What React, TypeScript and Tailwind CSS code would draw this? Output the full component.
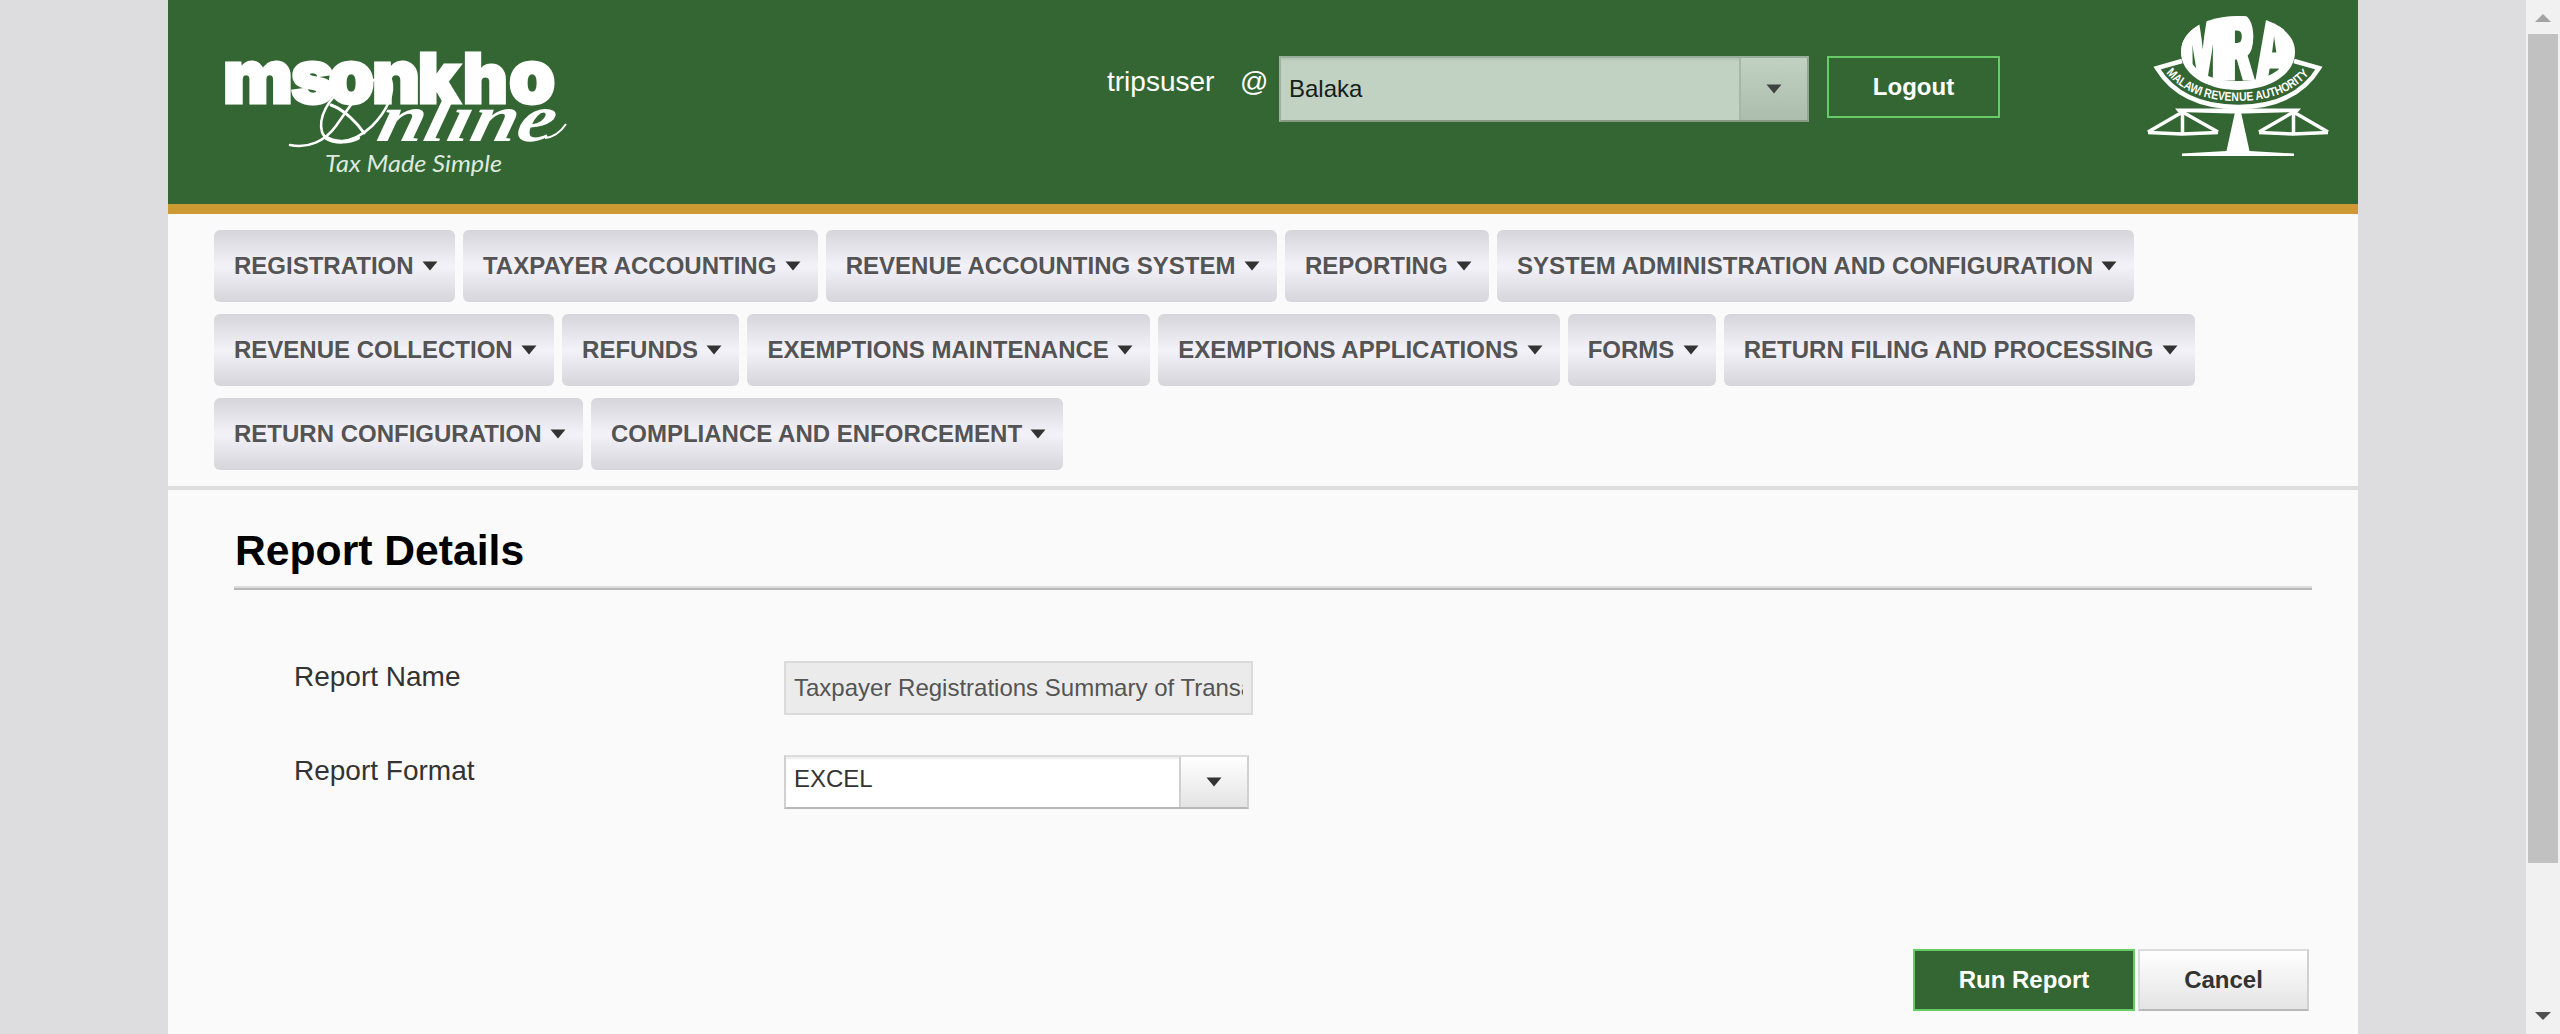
import React from "react";

const menuRows: string[][] = [
  ["REGISTRATION", "TAXPAYER ACCOUNTING", "REVENUE ACCOUNTING SYSTEM", "REPORTING", "SYSTEM ADMINISTRATION AND CONFIGURATION"],
  ["REVENUE COLLECTION", "REFUNDS", "EXEMPTIONS MAINTENANCE", "EXEMPTIONS APPLICATIONS", "FORMS", "RETURN FILING AND PROCESSING"],
  ["RETURN CONFIGURATION", "COMPLIANCE AND ENFORCEMENT"],
];

function Caret() {
  return (
    <svg width="16" height="10" viewBox="0 0 16 10" className="shrink-0">
      <path d="M0.5 0.5H15.5L8 9.5Z" fill="#333" />
    </svg>
  );
}

function MsonkhoLogo() {
  return (
    <svg width="360" height="140" viewBox="220 40 360 140" fill="#fff" className="block overflow-visible">
      <text y="103" x="223 291 328 372 418 463 509" fontFamily="Inter" fontWeight="900" fontSize="74" stroke="#fff" strokeWidth="3">
        mson<tspan fontSize="69">kh</tspan>o
      </text>
      <g fill="none" stroke="#fff" strokeLinecap="round">
        <path strokeWidth="2.5" d="M345 88C328 98 318 118 322 132C327 146 352 145 372 126C388 110 395 92 391 80C389 74 378 76 368 84C356 96 346 112 336 126C325 141 308 149 290 145" />
        <path strokeWidth="3" d="M331 105C345 110 358 124 364 133" />
        <path strokeWidth="4" d="M325 137C335 144 350 142 358 138" />
      </g>
      <text transform="translate(375 141) skewX(-14)" x="0" y="0" fontFamily="Liberation Serif" fontStyle="italic" fontWeight="700" fontSize="68" textLength="176" lengthAdjust="spacingAndGlyphs">
        nline
      </text>
      <path d="M545 138C555 137 562 130 566 124" fill="none" stroke="#fff" strokeWidth="2" />
      <text x="325" y="172" fontFamily="Lato" fontStyle="italic" fontSize="22.500" textLength="177" lengthAdjust="spacingAndGlyphs" fill="#dfe9df">
        Tax Made Simple
      </text>
    </svg>
  );
}

function MraLogo() {
  return (
    <svg width="200" height="150" viewBox="2140 10 200 150" className="block">
      <defs>
        <clipPath id="dome">
          <path d="M2181 52C2181 30 2206 16 2238 16S2295 30 2295 52C2295 70 2270 84 2238 84S2181 70 2181 52Z" />
        </clipPath>
        <path id="ribbon" d="M2166 73Q2190 101 2238 101T2311 72" />
      </defs>
      <path d="M2182 61L2157 68Q2181 107 2238 107Q2295 107 2319 68L2294 61" fill="none" stroke="#fff" strokeWidth="4.500" />
      <path d="M2196 27C2186 34 2181 42 2181 52C2181 74 2206 90 2238 90S2295 74 2295 52C2295 42 2290 34 2280 27L2287 58C2280 74 2262 81 2238 81S2196 74 2189 58Z" fill="#fff" />
      <g clipPath="url(#dome)">
        <text transform="translate(2181 79) scale(0.54 1)" x="-2 77 138" y="0" fontFamily="Inter" fontWeight="900" fontSize="88" fill="#fff" stroke="#fff" strokeWidth="3">
          MRA
        </text>
      </g>
      <text fontFamily="Liberation Sans" fontWeight="700" fontSize="12.500" fill="#fff">
        <textPath href="#ribbon" textLength="158" lengthAdjust="spacingAndGlyphs">MALAWI REVENUE AUTHORITY</textPath>
      </text>
      <path d="M2175 108.5L2301 108.5L2298 112L2245 113.5H2231L2178 112Z" fill="#fff" />
      <g fill="none" stroke="#fff" strokeWidth="3.500" strokeLinejoin="round">
        <path d="M2182.500 112V134M2182.500 112L2148 132M2182.500 112L2218 132M2148 132.500L2182 134L2218 132.500" />
        <path d="M2293.500 112V134M2293.500 112L2259 132M2293.500 112L2328 132M2259 132.500L2293 134L2328 132.500" />
      </g>
      <path d="M2235 112H2241L2249.500 151L2294 153.500V156H2182V153.500L2226.500 151Z" fill="#fff" />
    </svg>
  );
}

function Header() {
  return (
    <header className="flex h-[214px] items-start border-b-[10px] border-[#cc9933] bg-[#336633] pl-[52px] text-white">
      <div className="mt-10 w-[360px] shrink-0">
        <MsonkhoLogo />
      </div>
      <div className="ml-[527px] mt-[66px] w-[133px] shrink-0 text-[28px] leading-8">tripsuser</div>
      <div className="mt-[66px] w-[39px] shrink-0 text-[28px] leading-8">@</div>
      <div className="mt-14 flex h-[66px] w-[530px] shrink-0 border-2 border-b-[#859985] border-l-[#9fb19f] border-r-[#92a592] border-t-[#9aaf9b] bg-[#c1d1c2] text-[24px] text-[#14211a] shadow-[inset_0_3px_2px_-1px_#b4c5b5]">
        <div className="flex-1 pl-2 pt-[17px] leading-7">Balaka</div>
        <div className="flex w-[68px] items-center justify-center border-l-2 border-[#a3b5a4] bg-linear-to-b from-[#c1d1c2] to-[#aabbab] opacity-90">
          <Caret />
        </div>
      </div>
      <button className="ml-[18px] mt-14 h-[62px] w-[173px] shrink-0 border-2 border-[#66cc66] text-[24px] font-bold leading-7">Logout</button>
      <div className="ml-[140px] mt-[10px] shrink-0">
        <MraLogo />
      </div>
    </header>
  );
}

function Menu() {
  return (
    <nav className="flex h-[276px] flex-col gap-3 border-b-4 border-[#dddddd] pl-[46px] pt-4">
      {menuRows.map((row) => (
        <div key={row[0]} className="flex gap-2">
          {row.map((label) => (
            <button key={label} className="flex h-[72px] items-center whitespace-nowrap rounded-md bg-linear-to-b from-[#d6d5dc] via-[#f3f2f9] to-[#d6d5dc] pl-5 pr-[17px] text-[24px] font-bold text-[#545454]">
              {label}
              <span className="ml-[8.4px] flex">
                <Caret />
              </span>
            </button>
          ))}
        </div>
      ))}
    </nav>
  );
}

function ReportForm() {
  return (
    <main className="pl-[66px] text-[#333]">
      <div className="w-[2078px] border-b-2 border-[#b8b8b8]">
        <h1 className="h-[98px] border-b-2 border-[#dcdcdc] pl-px pt-9 text-[42.67px] font-bold leading-[48px] text-black">Report Details</h1>
      </div>
      <div className="flex pl-[60px] pt-[71px]">
        <label className="w-[490px] text-[28px] leading-8">Report Name</label>
        <div className="h-[54px] w-[469px] border-2 border-[#dadada] bg-[#ebebeb] px-2 text-[24px] leading-[50px] text-[#545454]">
          <div className="overflow-hidden whitespace-nowrap">Taxpayer Registrations Summary of Transactions</div>
        </div>
      </div>
      <div className="flex pl-[60px] pt-10">
        <label className="w-[490px] text-[28px] leading-8">Report Format</label>
        <div className="flex h-[54px] w-[465px] border-2 border-b-[#b8b8b8] border-l-[#d0d0d0] border-r-[#d0d0d0] border-t-[#dcdcdc] bg-white text-[24px]">
          <div className="flex-1 pl-2 pt-[8px] leading-7 shadow-[inset_0_3px_2px_-1px_#eeeeee]">EXCEL</div>
          <div className="flex w-[68px] items-center justify-center border-l-2 border-[#d0d0d0] bg-linear-to-b from-white to-[#e4e4e4]">
            <Caret />
          </div>
        </div>
      </div>
      <div className="mt-[140px] flex w-[2075px] justify-end gap-[3px] text-[24px] font-bold">
        <button className="h-[62px] w-[222px] border-2 border-[#66cc66] bg-[#336633] text-white">Run Report</button>
        <button className="h-[62px] w-[171px] border-2 border-b-[#b8b8b8] border-l-[#dcdcdc] border-r-[#d0d0d0] border-t-[#dcdcdc] bg-linear-to-b from-white to-[#e4e4e4]">Cancel</button>
      </div>
    </main>
  );
}

function Scrollbar() {
  return (
    <aside className="flex w-[34px] flex-col items-center bg-[#f1f1f1]">
      <svg width="34" height="34" viewBox="0 0 34 34">
        <path d="M9 22L17 14L25 22Z" fill="#a3a3a3" />
      </svg>
      <div className="h-[829px] w-[30px] bg-[#c1c1c1]" />
      <svg width="34" height="34" viewBox="0 0 34 34" className="mt-auto">
        <path d="M9 12L17 20L25 12Z" fill="#505050" />
      </svg>
    </aside>
  );
}

export default function App() {
  return (
    <div className="flex h-[1034px] w-[2560px] overflow-hidden bg-[#dddddf] font-['Liberation_Sans',Arial,sans-serif]">
      <div className="ml-[168px] mr-[168px] w-[2190px] shrink-0 bg-[#fafafa]">
        <Header />
        <Menu />
        <ReportForm />
      </div>
      <Scrollbar />
    </div>
  );
}
